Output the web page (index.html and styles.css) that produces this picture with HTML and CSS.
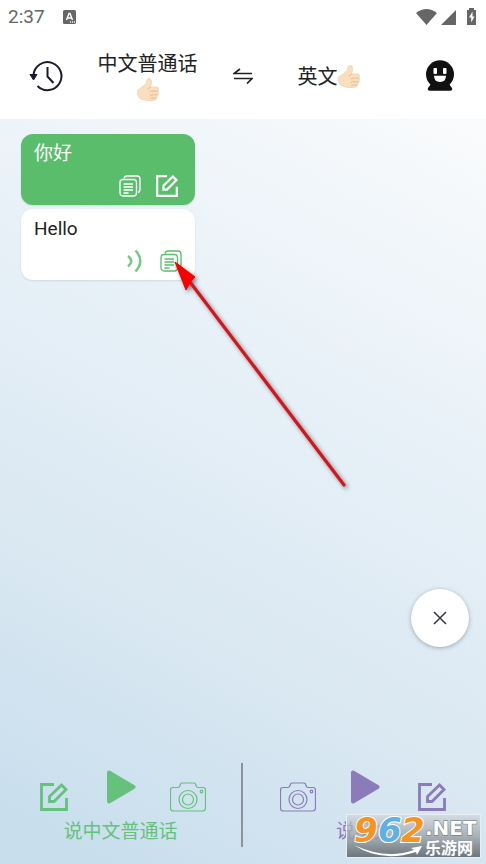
FILE: index.html
```html
<!DOCTYPE html>
<html lang="zh-CN">
<head>
<meta charset="utf-8">
<meta name="viewport" content="width=device-width, initial-scale=1">
<title>翻译</title>
<link rel="stylesheet" href="styles.css">
</head>
<body>
<svg class="defs" aria-hidden="true">
  <symbol id="edit" viewBox="0 0 28 28"><path d="M14 1.500H1.500v25h25V15M9.500 18.500v-5L21.500 2l4.500 4.500-12 12z" fill="none" stroke="currentColor" stroke-width="2.800"/></symbol>
  <symbol id="copy" viewBox="0 0 22 22"><g fill="none" stroke="currentColor" stroke-width="1.300"><rect x="1" y="4.500" width="16.500" height="16.500" rx="3"/><path d="M5 3.500Q5.500 1 8 1h10q3 0 3 3v10q0 3-2 3.500M4.500 9h9.500M4.500 12h9.500M4.500 15h9.500M4.500 18h5"/></g></symbol>
  <symbol id="camera" viewBox="0 0 36 30"><g fill="none" stroke="currentColor" stroke-width="1.200"><path d="M3 5.500h5q1.500 0 2-2l.5-1.500q.5-1 2-1h11q1.500 0 2 1l.5 1.500q.5 2 2 2h5q2.500 0 2.500 2.500v18q0 3-3 3h-29q-3 0-3-3V8q0-2.500 2.500-2.500z"/><circle cx="18" cy="17.500" r="9"/><circle cx="18" cy="17.500" r="5.500"/><circle cx="31.500" cy="9.500" r="1.300"/></g></symbol>
  <symbol id="play" viewBox="0 0 30 34"><path d="M3 2.500v29L27.500 17z" fill="currentColor" stroke="currentColor" stroke-width="4" stroke-linejoin="round"/></symbol>
  <symbol id="thumb" viewBox="0 0 22 24"><path d="M.7 11.500q2.500-.5 4.300-2.500L9 5.500 10 2q.5-1.700 2.300-1.500Q14.500.8 14.500 3q0 3-1 6h6q2 .3 2 2t-.7 2q1 .7.700 2.200-.2 1.300-1 1.800.6 2-1 2.800 0 2.200-2.200 2.500-5.300.8-10-.3Q1 20.500.7 17z" fill="#fadfbf" stroke="#ecc9a3" stroke-width=".6"/><path d="M13.500 9q-2 .7-2.500 2.500M21 13h-6q-2 0-2 1.500M20.500 16.800H15q-2 0-2 1.500M19 20h-4q-1.500 0-1.500 1.200" fill="none" stroke="#e0b386" stroke-width=".8"/></symbol>
</svg>
<div class="app">
  <div class="status">
    <span class="time">2:37</span>
    <svg class="badge" viewBox="0 0 14 14"><rect width="13" height="14" rx="1.500" fill="#666"/><path d="M3.500 10 6 3.500h1L9.500 10M4.500 8h4M7 12h1m1 0h1m1 0h1" fill="none" stroke="#fff" stroke-width="1.400"/></svg>
    <svg class="signals" viewBox="0 0 62 18"><g fill="#666"><path d="M0 5q10.500-8 21 0L10.500 17z"/><path d="M40 2v15H25z"/><path d="M51 2h2V0h5v2h2v15h-9z"/></g><path d="m56.500 3.500-3.500 6h2.200v5l3.300-6h-2z" fill="#fff"/></svg>
  </div>
  <header class="header">
    <button class="icon-button" aria-label="历史记录">
      <svg class="history" viewBox="0 0 34 32"><path d="M4.500 15A14 14 0 1 1 8.500 26M18.500 7v9.500l6 6.500" fill="none" stroke="#1b1b2b" stroke-width="2"/><path d="M1 14.500h7L4.500 20z" fill="#1b1b2b" stroke="#1b1b2b"/></svg>
    </button>
    <button class="language">中文普通话<svg class="thumb"><use href="#thumb"/></svg></button>
    <button class="icon-button" aria-label="交换语言">
      <svg class="swap" viewBox="0 0 20 16"><path d="M19 5.500H1L7 1M1 10.500h18L14 15.500" fill="none" stroke="#222" stroke-width="1.700"/></svg>
    </button>
    <button class="language language-to">英文<svg class="thumb"><use href="#thumb"/></svg></button>
    <button class="icon-button" aria-label="我的">
      <svg class="face" viewBox="0 0 28 31"><circle cx="14" cy="14.300" r="14" fill="#111"/><path d="M5 24h18l3 4q1 2.700-2 2.700H4Q1 30.700 2 28z" fill="#111"/><rect x="7.500" y="8" width="3.500" height="6" rx="1" fill="#fff"/><rect x="17" y="8" width="3.500" height="6" rx="1" fill="#fff"/><path d="M8 15.800h12q0 6.200-6 6.200t-6-6.200z" fill="#fff"/></svg>
    </button>
  </header>
  <main class="chat">
    <article class="bubble source">
      <p class="message">你好</p>
      <div class="actions">
        <button aria-label="复制"><svg class="small"><use href="#copy"/></svg></button>
        <button aria-label="编辑"><svg class="small"><use href="#edit"/></svg></button>
      </div>
    </article>
    <article class="bubble result">
      <p class="message">Hello</p>
      <div class="actions">
        <button aria-label="播放"><svg class="small" viewBox="0 0 22 22"><path d="M5 6q6.500 5 0 10.500M12.500.500q9.500 10.500 0 21" fill="none" stroke="#74ca82" stroke-width="2.400"/></svg></button>
        <button aria-label="复制"><svg class="small"><use href="#copy"/></svg></button>
      </div>
    </article>
  </main>
  <footer class="footer">
    <section class="speak green">
      <div class="tools">
        <button aria-label="输入中文"><svg class="edit"><use href="#edit"/></svg></button>
        <button class="play-button" aria-label="播放中文"><svg class="play"><use href="#play"/></svg></button>
        <button aria-label="拍照翻译中文"><svg class="camera"><use href="#camera"/></svg></button>
      </div>
      <p class="label">说中文普通话</p>
    </section>
    <section class="speak purple">
      <div class="tools">
        <button aria-label="拍照翻译英文"><svg class="camera"><use href="#camera"/></svg></button>
        <button class="play-button" aria-label="播放英文"><svg class="play"><use href="#play"/></svg></button>
        <button aria-label="输入英文"><svg class="edit"><use href="#edit"/></svg></button>
      </div>
      <p class="label">说英文</p>
    </section>
  </footer>
  <button class="close" aria-label="关闭"><svg viewBox="0 0 14 14"><path d="m1 1 12 12M13 1 1 13" stroke="#3c3c44" stroke-width="1.600"/></svg></button>
  <svg class="arrow" viewBox="0 0 190 240" aria-hidden="true"><path d="M20 27 174 230" stroke="#d6151b" stroke-width="3.200" stroke-linecap="round"/><path d="m5 7 20 15-4 4-5 9z" fill="#f60000" stroke="#f60000"/></svg>
  <div class="watermark">
    <svg viewBox="0 0 133 42">
      <g class="digits"><text x="7" y="27" fill="#f7931e">9</text><text x="31" y="27" fill="#5fb0e5">6</text><text x="54" y="27" fill="#f7931e">2</text></g>
      <text class="net" x="78" y="20">.NET</text>
      <text class="site" x="78" y="39">乐游网</text>
      <path d="M7 30q32 15 60 5l-3-2 11-2-5 9-1-3Q34 48 7 30z" fill="#fff"/>
    </svg>
  </div>
</div>
</body>
</html>
```
FILE: styles.css
```css
* { box-sizing: border-box; }
body { margin: 0; font-family: Roboto, "Noto Sans CJK SC", sans-serif; color: #222; }
button { border: 0; padding: 0; background: none; color: inherit; font: inherit; display: flex; align-items: center; justify-content: center; }
p { margin: 0; }
svg { display: block; }
.defs { position: absolute; width: 0; height: 0; }
.app { position: relative; min-height: 100vh; display: flex; flex-direction: column; overflow: hidden; background: linear-gradient(208deg, #fafbfc 10%, #e8f1f8 42%, #dae8f2 70%, #c8deed 96%); }
.status { height: 34px; padding: 0 8px; display: flex; align-items: center; background: #fff; color: #666; }
.time { font-size: 19px; line-height: 34px; }
.badge { width: 14px; height: 14px; margin-left: 18px; }
.signals { width: 62px; height: 18px; margin-left: auto; }
.header { height: 85px; padding-bottom: 2px; display: grid; grid-template-columns: 92px 1fr 80px 1fr 92px; align-items: center; background: #fff; }
.history { width: 34px; height: 32px; }
.swap { width: 20px; height: 16px; }
.face { width: 28px; height: 31px; }
.language { display: block; padding-top: 2px; font-size: 20px; line-height: 26px; text-align: center; }
.language-to { padding-right: 20px; }
.thumb { display: inline-block; width: 22px; height: 24px; vertical-align: -5px; }
.chat { flex: 1; padding: 15px 21px; display: flex; flex-direction: column; align-items: flex-start; gap: 4px; }
.bubble { width: 174px; min-height: 71px; padding: 4px 13px 8px; border-radius: 12px; display: flex; flex-direction: column; justify-content: space-between; box-shadow: 0 1px 2px #a8b8c466; }
.source { background: #5abd6b; color: #fff; }
.result { background: #fff; }
.message { font-size: 19px; line-height: 32px; }
.actions { display: flex; justify-content: flex-end; gap: 15px; padding-right: 4px; }
.result .actions { padding-right: 0; color: #5abd6b; }
.small { width: 22px; height: 22px; }
.footer { height: 101px; display: grid; grid-template-columns: 1fr 1fr; padding-bottom: 20px; }
.speak { display: flex; flex-direction: column; align-items: center; }
.green { color: #65c17c; border-right: 2px solid #8b9299; }
.purple { color: #8b7bb9; }
.tools { display: grid; grid-template-columns: repeat(3, 67px); height: 54px; align-items: center; padding-top: 13px; }
.tools button { height: 41px; }
.tools .play-button { padding-bottom: 20px; }
.edit { width: 28px; height: 28px; }
.play { width: 30px; height: 34px; flex: none; }
.camera { width: 36px; height: 30px; }
.label { font-size: 19px; line-height: 30px; }
.close { position: absolute; right: 17px; bottom: 217px; width: 58px; height: 58px; border-radius: 50%; background: #fff; box-shadow: 0 1px 4px #6c7a8899; }
.close svg { width: 14px; height: 14px; }
.arrow { position: absolute; left: 170px; top: 255px; width: 190px; height: 240px; filter: drop-shadow(2px 2px 2px #0007); pointer-events: none; }
.watermark { position: absolute; right: 5px; bottom: 6px; width: 135px; height: 44px; border: 1px solid #e8eef2; background: linear-gradient(#d0d6daaa, #9ca3a8cc 50%, #687076f2); }
.watermark svg { width: 100%; height: 100%; }
.digits { font: italic bold 34px "DejaVu Sans", sans-serif; stroke: #fff; stroke-width: 2px; paint-order: stroke; }
.net { font: bold 20px "DejaVu Sans", sans-serif; fill: #fff; stroke: #666d72; stroke-width: 1px; paint-order: stroke; }
.site { font: bold 16px "Noto Sans CJK SC", sans-serif; fill: #fff; }
```
